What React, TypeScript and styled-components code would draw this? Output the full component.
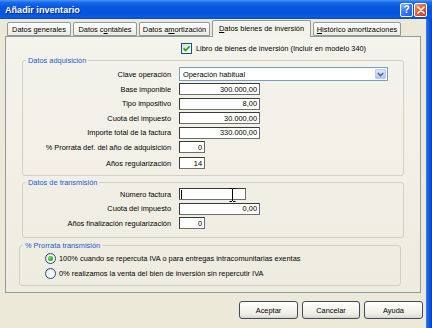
import React from "react";
import styled, { createGlobalStyle } from "styled-components";

const Global = createGlobalStyle`
  html, body { margin: 0; padding: 0; }
  body {
    width: 432px; height: 328px; overflow: hidden; background: #ECE9D8;
    font-family: "Liberation Sans", Arial, sans-serif; font-size: 7.4px; color: #000;
  }
  * { box-sizing: border-box; }
`;

const Window = styled.div`
  width: 432px;
  height: 328px;
  display: flex;
  flex-direction: column;
  background: #ECE9D8;
`;

const TitleBar = styled.div`
  height: 19px;
  flex: none;
  display: flex;
  align-items: center;
  padding: 0 5px 0 5px;
  background: linear-gradient(to bottom, #4A97F8 0%, #1D6CEB 12%, #0958DF 35%, #0554DC 70%, #0A5CE2 88%, #0B4BC2 100%);
`;

const Title = styled.div`
  font-family: "Liberation Sans", Arial, sans-serif;
  font-weight: bold;
  font-size: 9px;
  color: #fff;
  text-shadow: 1px 1px 0 #0B2A8A;
  letter-spacing: 0.05px;
`;

const TitleButtons = styled.div`
  margin-left: auto;
  display: flex;
  gap: 1px;
`;

const CapButton = styled.div<{ $red?: boolean }>`
  width: 13px;
  height: 14px;
  border: 1px solid #fff;
  border-radius: 2px;
  display: flex;
  align-items: center;
  justify-content: center;
  color: #fff;
  font-weight: bold;
  font-size: 10px;
  background: ${(p) =>
    p.$red
      ? "linear-gradient(135deg, #F0A48A 0%, #E0603C 45%, #C8401C 100%)"
      : "linear-gradient(135deg, #8FB8FA 0%, #3A7AF0 45%, #1E5AD8 100%)"};
`;

const Body = styled.div`
  flex: 1;
  display: flex;
  min-height: 0;
`;

const Client = styled.div`
  flex: 1;
  display: flex;
  flex-direction: column;
  padding: 1px 3px 0 5px;
`;

const RightFrame = styled.div`
  width: 6px;
  flex: none;
  background: linear-gradient(to right, #3F83F2 0%, #1A62E4 30%, #0B4FD6 70%, #0A3FBF 100%);
`;

const TabStrip = styled.div`
  height: 16px;
  display: flex;
  align-items: flex-end;
  gap: 2px;
  padding-left: 2px;
`;

const Tab = styled.div<{ $w: number; $active?: boolean }>`
  width: ${(p) => p.$w}px;
  height: ${(p) => (p.$active ? 17 : 14)}px;
  margin-bottom: ${(p) => (p.$active ? -1 : 0)}px;
  position: relative;
  z-index: ${(p) => (p.$active ? 1 : 0)};
  border: 1px solid #919B9C;
  border-bottom: ${(p) => (p.$active ? "none" : "1px solid #919B9C")};
  border-radius: 2px 2px 0 0;
  background: ${(p) =>
    p.$active ? "#F4F3EB" : "linear-gradient(to bottom, #FFFFFF 0%, #F6F5F0 50%, #ECEBE4 100%)"};
  display: flex;
  align-items: center;
  justify-content: center;
  padding-bottom: ${(p) => (p.$active ? 2 : 0)}px;
  white-space: nowrap;
`;

const U = styled.span`
  text-decoration: underline;
  text-underline-offset: 1px;
`;

const Panel = styled.div`
  width: 416px;
  height: 257px;
  margin-right: 2px;
  border: 1px solid #919B9C;
  background: linear-gradient(to bottom, #F4F3EC 0%, #F1EFE5 60%, #EEECE0 100%);
  display: flex;
  flex-direction: column;
`;

const CheckRow = styled.div`
  margin-top: 6px;
  height: 11px;
  padding-left: 175px;
  display: flex;
  align-items: center;
  gap: 4px;
`;

const CheckBox = styled.div`
  width: 11px;
  height: 11px;
  border: 1px solid #1C5180;
  background: linear-gradient(135deg, #DCDCD6 0%, #F4F4F0 60%, #FFFFFF 100%);
  display: flex;
  align-items: center;
  justify-content: center;
`;

const Group = styled.fieldset<{ $left: number; $top: number; $pt: number; $pb: number }>`
  margin: ${(p) => p.$top}px 0 0 ${(p) => p.$left}px;
  width: 382px;
  padding: ${(p) => p.$pt}px 0 ${(p) => p.$pb}px 0;
  border: 1px solid #D3D0C0;
  border-radius: 3px;
  min-inline-size: 0;
`;

const Legend = styled.legend`
  margin-left: 3px;
  padding: 0 2px;
  height: 9px;
  line-height: 9px;
  color: #2457D0;
`;

const Row = styled.div<{ $h?: number; $mt?: number }>`
  height: ${(p) => p.$h ?? 14.5}px;
  margin-top: ${(p) => p.$mt ?? 0}px;
  display: grid;
  grid-template-columns: 148px auto;
  column-gap: 8px;
  align-items: center;
`;

const Label = styled.div`
  text-align: right;
  white-space: nowrap;
`;

const Field = styled.div<{ $w: number }>`
  position: relative;
  width: ${(p) => p.$w}px;
  height: 12px;
  border: 1px solid;
  border-color: #3A3A3A #6E6E6E #6E6E6E #3A3A3A;
  background: #fff;
  display: flex;
  align-items: center;
  justify-content: flex-end;
  padding: 0 2px;
  white-space: nowrap;
`;

const Caret = styled.span`
  width: 1px;
  height: 9px;
  background: #000;
  margin-right: auto;
  margin-left: -1px;
`;

const Cursor = styled.svg`
  position: absolute;
  left: 49px;
  top: -1px;
`;

const Combo = styled.div`
  width: 209px;
  height: 14px;
  border: 1px solid #7F9DB9;
  background: #fff;
  display: flex;
  align-items: center;
  padding-left: 3px;
`;

const ComboArrow = styled.div`
  margin-left: auto;
  margin-right: 1px;
  width: 11px;
  height: 10px;
  border: 1px solid #B9CBF3;
  border-radius: 1px;
  background: linear-gradient(to bottom, #DCE6FD 0%, #C3D4FB 60%, #B1C6F6 100%);
  display: flex;
  align-items: center;
  justify-content: center;
`;

const RadioRow = styled.div`
  height: 15px;
  display: flex;
  align-items: center;
  gap: 3px;
  padding-left: 25px;
  white-space: nowrap;
`;

const Radio = styled.div`
  width: 11px;
  height: 11px;
  border-radius: 50%;
  border: 1px solid #1C5180;
  background: radial-gradient(circle at 65% 65%, #FFFFFF 0%, #F2F2EE 50%, #D8D8D2 100%);
  display: flex;
  align-items: center;
  justify-content: center;
`;

const Dot = styled.div`
  width: 5px;
  height: 5px;
  border-radius: 50%;
  background: radial-gradient(circle at 35% 35%, #7FE27F 0%, #2CB02C 55%, #138A13 100%);
`;

const ButtonRow = styled.div`
  margin-top: 8px;
  display: flex;
  justify-content: flex-end;
  gap: 4px;
`;

const Button = styled.div<{ $w: number }>`
  width: ${(p) => p.$w}px;
  height: 18px;
  border: 1px solid #3F4B60;
  border-radius: 3px;
  background: linear-gradient(to bottom, #FFFFFF 0%, #F7F6F2 40%, #ECEAE2 80%, #D9D4C8 100%);
  display: flex;
  align-items: center;
  justify-content: center;
`;

const tabs = [
  { w: 64, node: <>Datos generales</> },
  { w: 64, node: <>Datos c<U>o</U>ntables</> },
  { w: 71, node: <>Datos a<U>m</U>ortización</> },
  { w: 99, node: <><U>D</U>atos bienes de inversión</>, active: true },
  { w: 88, node: <><U>H</U>istórico amortizaciones</> },
];

const adq: { label: string; value: string; w: number; mt?: number }[] = [
  { label: "Base imponible", value: "300.000,00", w: 81 },
  { label: "Tipo impositivo", value: "8,00", w: 81 },
  { label: "Cuota del impuesto", value: "30.000,00", w: 81 },
  { label: "Importe total de la factura", value: "330.000,00", w: 81 },
  { label: "% Prorrata def. del año de adquisición", value: "0", w: 26 },
  { label: "Años regularización", value: "14", w: 26, mt: 1.5 },
];

export default function App() {
  return (
    <>
      <Global />
      <Window>
        <TitleBar>
          <Title>Añadir inventario</Title>
          <TitleButtons>
            <CapButton>?</CapButton>
            <CapButton $red>
              <svg width="8" height="8" viewBox="0 0 8 8">
                <path d="M1 1 L7 7 M7 1 L1 7" stroke="#fff" strokeWidth="1.6" strokeLinecap="round" />
              </svg>
            </CapButton>
          </TitleButtons>
        </TitleBar>
        <Body>
          <Client>
            <TabStrip>
              {tabs.map((t, i) => (
                <Tab key={i} $w={t.w} $active={t.active}>
                  {t.node}
                </Tab>
              ))}
            </TabStrip>
            <Panel>
              <CheckRow>
                <CheckBox>
                  <svg width="9" height="9" viewBox="0 0 9 9">
                    <path d="M1.6 4.4 L3.6 6.6 L7.6 2.2" fill="none" stroke="#21A121" strokeWidth="1.7" />
                  </svg>
                </CheckBox>
                <span>Libro de bienes de inversión (Incluir en modelo 340)</span>
              </CheckRow>

              <Group $left={16} $top={1.5} $pt={2.5} $pb={4.5}>
                <Legend>Datos adquisición</Legend>
                <Row $h={14} $mt={0}>
                  <Label>Clave operación</Label>
                  <Combo>
                    <span>Operación habitual</span>
                    <ComboArrow>
                      <svg width="7" height="5" viewBox="0 0 7 5">
                        <path d="M0.8 1 L3.5 3.8 L6.2 1" fill="none" stroke="#4D6185" strokeWidth="1.4" />
                      </svg>
                    </ComboArrow>
                  </Combo>
                </Row>
                {adq.map((r, i) => (
                  <Row key={r.label} $mt={i === 0 ? 1 : r.mt}>
                    <Label>{r.label}</Label>
                    <Field $w={r.w}>{r.value}</Field>
                  </Row>
                ))}
              </Group>

              <Group $left={16} $top={1.5} $pt={0.5} $pb={6}>
                <Legend>Datos de transmisión</Legend>
                <Row>
                  <Label>Número factura</Label>
                  <Field $w={67}>
                    <Caret />
                    <Cursor width="7" height="14" viewBox="0 0 7 14">
                      <path d="M0.5 0.5 H3 M4 0.5 H6.5 M3.5 1 V13 M0.5 13.5 H3 M4 13.5 H6.5" fill="none" stroke="#000" strokeWidth="1" />
                    </Cursor>
                  </Field>
                </Row>
                <Row>
                  <Label>Cuota del impuesto</Label>
                  <Field $w={81}>0,00</Field>
                </Row>
                <Row>
                  <Label>Años finalización regularización</Label>
                  <Field $w={26}>0</Field>
                </Row>
              </Group>

              <Group $left={13} $top={3} $pt={1} $pb={4.5}>
                <Legend>% Prorrata transmisión</Legend>
                <RadioRow>
                  <Radio>
                    <Dot />
                  </Radio>
                  <span>100% cuando se repercuta IVA o para entregas intracomunitarias exentas</span>
                </RadioRow>
                <RadioRow>
                  <Radio />
                  <span>0% realizamos la venta del bien de inversión sin repercutir IVA</span>
                </RadioRow>
              </Group>
            </Panel>
            <ButtonRow>
              <Button $w={59}>Aceptar</Button>
              <Button $w={58}>Cancelar</Button>
              <Button $w={59}>Ayuda</Button>
            </ButtonRow>
          </Client>
          <RightFrame />
        </Body>
      </Window>
    </>
  );
}
